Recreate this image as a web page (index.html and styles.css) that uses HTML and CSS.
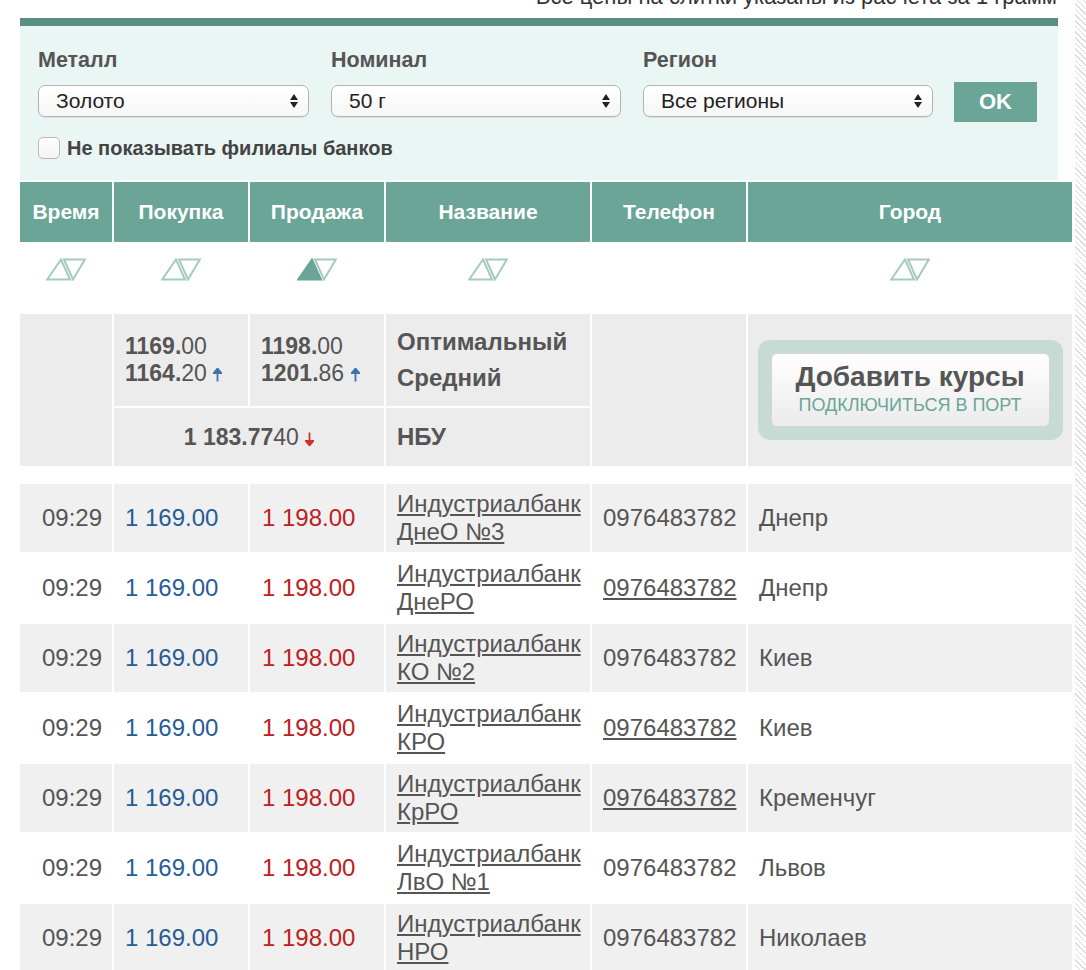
FILE: index.html
```html
<!DOCTYPE html>
<html lang="ru">
<head>
<meta charset="utf-8">
<title>Курсы слитков</title>
<link rel="stylesheet" href="styles.css">
</head>
<body>
<div class="page">
  <main class="content">
    <p class="note">Все цены на слитки указаны из расчета за 1 грамм</p>
    <div class="topbar"></div>
    <form class="filters">
      <div class="fields">
        <div class="field field-metal">
          <span class="field-label">Металл</span>
          <span class="select"><span class="select-text">Золото</span><svg class="select-arrows" width="8" height="14" viewBox="0 0 8 14"><path d="M0 6 L4 0 L8 6 Z M0 8 L4 14 L8 8 Z"/></svg></span>
        </div>
        <div class="field field-nominal">
          <span class="field-label">Номинал</span>
          <span class="select"><span class="select-text">50 г</span><svg class="select-arrows" width="8" height="14" viewBox="0 0 8 14"><path d="M0 6 L4 0 L8 6 Z M0 8 L4 14 L8 8 Z"/></svg></span>
        </div>
        <div class="field field-region">
          <span class="field-label">Регион</span>
          <span class="select"><span class="select-text">Все регионы</span><svg class="select-arrows" width="8" height="14" viewBox="0 0 8 14"><path d="M0 6 L4 0 L8 6 Z M0 8 L4 14 L8 8 Z"/></svg></span>
        </div>
        <button class="ok" type="button">OK</button>
      </div>
      <label class="check"><span class="box"></span><span class="check-text">Не показывать филиалы банков</span></label>
    </form>

    <table class="rates">
      <colgroup>
        <col class="c-time"><col class="c-buy"><col class="c-sell"><col class="c-name"><col class="c-phone"><col class="c-city">
      </colgroup>
      <thead>
        <tr class="head">
          <th>Время</th><th>Покупка</th><th>Продажа</th><th>Название</th><th>Телефон</th><th>Город</th>
        </tr>
        <tr class="sort">
          <td><svg class="sort-ic" width="40" height="23" viewBox="0 0 40 23"><path class="up" d="M1.2 21.5 L15 1.5 L24 21.5 Z"/><path class="down" d="M18 1.5 L38.8 1.5 L27 21.5 Z"/></svg></td>
          <td><svg class="sort-ic" width="40" height="23" viewBox="0 0 40 23"><path class="up" d="M1.2 21.5 L15 1.5 L24 21.5 Z"/><path class="down" d="M18 1.5 L38.8 1.5 L27 21.5 Z"/></svg></td>
          <td><svg class="sort-ic active" width="40" height="23" viewBox="0 0 40 23"><path class="up" d="M1.2 21.5 L15 1.5 L24 21.5 Z"/><path class="down" d="M18 1.5 L38.8 1.5 L27 21.5 Z"/></svg></td>
          <td><svg class="sort-ic" width="40" height="23" viewBox="0 0 40 23"><path class="up" d="M1.2 21.5 L15 1.5 L24 21.5 Z"/><path class="down" d="M18 1.5 L38.8 1.5 L27 21.5 Z"/></svg></td>
          <td></td>
          <td><svg class="sort-ic" width="40" height="23" viewBox="0 0 40 23"><path class="up" d="M1.2 21.5 L15 1.5 L24 21.5 Z"/><path class="down" d="M18 1.5 L38.8 1.5 L27 21.5 Z"/></svg></td>
        </tr>
      </thead>
      <tbody class="summary">
        <tr class="sum-top">
          <td rowspan="2"></td>
          <td class="num"><span class="v"><b>1169.</b>00</span><span class="v"><b>1164.</b>20 <svg class="arr up" width="9" height="14" viewBox="0 0 9 14"><path d="M4.5 13.5 V3"/><path class="head" d="M0.8 5 L4.5 0.5 L8.2 5 Z"/></svg></span></td>
          <td class="num"><span class="v"><b>1198.</b>00</span><span class="v"><b>1201.</b>86 <svg class="arr up" width="9" height="14" viewBox="0 0 9 14"><path d="M4.5 13.5 V3"/><path class="head" d="M0.8 5 L4.5 0.5 L8.2 5 Z"/></svg></span></td>
          <td class="sum-name"><span class="v">Оптимальный</span><span class="v">Средний</span></td>
          <td rowspan="2"></td>
          <td rowspan="2" class="promo-cell">
            <a class="promo" href="#"><span class="promo-inner"><span class="promo-title">Добавить курсы</span><span class="promo-sub">ПОДКЛЮЧИТЬСЯ В ПОРТ</span></span></a>
          </td>
        </tr>
        <tr class="sum-bottom">
          <td colspan="2" class="nbu"><b>1 183.77</b>40 <svg class="arr down" width="9" height="14" viewBox="0 0 9 14"><path d="M4.5 0.5 V11"/><path class="head" d="M0.8 9 L4.5 13.5 L8.2 9 Z"/></svg></td>
          <td class="sum-name">НБУ</td>
        </tr>
      </tbody>
      <tbody class="gap"><tr><td colspan="6"></td></tr></tbody>
      <tbody class="rows">
        <tr>
          <td class="time">09:29</td><td class="buy">1 169.00</td><td class="sell">1 198.00</td>
          <td class="name"><a href="#">Индустриалбанк<br>ДнеО №3</a></td>
          <td class="phone">0976483782</td><td class="city">Днепр</td>
        </tr>
        <tr>
          <td class="time">09:29</td><td class="buy">1 169.00</td><td class="sell">1 198.00</td>
          <td class="name"><a href="#">Индустриалбанк<br>ДнеРО</a></td>
          <td class="phone"><a href="#">0976483782</a></td><td class="city">Днепр</td>
        </tr>
        <tr>
          <td class="time">09:29</td><td class="buy">1 169.00</td><td class="sell">1 198.00</td>
          <td class="name"><a href="#">Индустриалбанк<br>КО №2</a></td>
          <td class="phone">0976483782</td><td class="city">Киев</td>
        </tr>
        <tr>
          <td class="time">09:29</td><td class="buy">1 169.00</td><td class="sell">1 198.00</td>
          <td class="name"><a href="#">Индустриалбанк<br>КРО</a></td>
          <td class="phone"><a href="#">0976483782</a></td><td class="city">Киев</td>
        </tr>
        <tr>
          <td class="time">09:29</td><td class="buy">1 169.00</td><td class="sell">1 198.00</td>
          <td class="name"><a href="#">Индустриалбанк<br>КрРО</a></td>
          <td class="phone"><a href="#">0976483782</a></td><td class="city">Кременчуг</td>
        </tr>
        <tr>
          <td class="time">09:29</td><td class="buy">1 169.00</td><td class="sell">1 198.00</td>
          <td class="name"><a href="#">Индустриалбанк<br>ЛвО №1</a></td>
          <td class="phone">0976483782</td><td class="city">Львов</td>
        </tr>
        <tr>
          <td class="time">09:29</td><td class="buy">1 169.00</td><td class="sell">1 198.00</td>
          <td class="name"><a href="#">Индустриалбанк<br>НРО</a></td>
          <td class="phone">0976483782</td><td class="city">Николаев</td>
        </tr>
      </tbody>
    </table>
  </main>
  <div class="stripe"></div>
</div>
</body>
</html>
```

FILE: styles.css
```css
html, body {
  margin: 0;
  padding: 0;
  overflow: hidden;
  background: #fff;
}

body {
  font-family: "Liberation Sans", Arial, Helvetica, sans-serif;
  color: #555;
}

.page {
  display: flex;
  height: 970px;
  padding-left: 20px;
}

.content {
  width: 1052px;
  flex: none;
}

.stripe {
  width: 11px;
  margin-left: 3px;
  flex: none;
  background: repeating-linear-gradient(45deg, #fff 0 3px, #dcdcdc 3px 4px);
}

/* top note, mostly scrolled off */
.note {
  width: 1037px;
  margin: -16px 0 8px;
  text-align: right;
  font-size: 22px;
  line-height: 26px;
  color: #333;
}

.topbar {
  width: 1038px;
  height: 8px;
  background: #5a8f84;
}

/* filter panel */
.filters {
  width: 1038px;
  box-sizing: border-box;
  margin: 0;
  padding: 22px 21px 21px 18px;
  background: #eaf6f4;
}

.fields {
  display: flex;
  align-items: flex-end;
}

.field {
  display: flex;
  flex-direction: column;
}

.field-metal { width: 271px; margin-right: 22px; }
.field-nominal { width: 290px; margin-right: 22px; }
.field-region { width: 290px; margin-right: 21px; }

.field-label {
  font-size: 21.5px;
  line-height: 24px;
  font-weight: bold;
  color: #555;
  margin-bottom: 13px;
}

.select {
  display: flex;
  align-items: center;
  justify-content: space-between;
  height: 32px;
  box-sizing: border-box;
  padding: 0 10px 0 17px;
  border: 1px solid #b3b3b3;
  border-radius: 7px;
  background: linear-gradient(#ffffff, #f6f6f6);
  box-shadow: 0 1px 1px rgba(0,0,0,0.08);
}

.select-text {
  font-size: 21px;
  color: #222;
}

.select-arrows {
  fill: #222;
}

.ok {
  width: 83px;
  height: 40px;
  margin-bottom: -5px;
  padding: 0;
  border: 0;
  background: #6aa597;
  color: #fff;
  font-family: inherit;
  font-size: 22px;
  font-weight: bold;
}

.check {
  display: flex;
  align-items: center;
  margin-top: 20px;
  height: 22px;
}

.box {
  width: 22px;
  height: 22px;
  box-sizing: border-box;
  border: 1px solid #b8b8b8;
  border-radius: 5px;
  background: linear-gradient(#ffffff, #f3f3f3);
  margin-right: 7px;
}

.check-text {
  font-size: 20px;
  font-weight: bold;
  color: #444;
}

/* table */
.rates {
  table-layout: fixed;
  width: 1056px;
  margin: 0 -2px;
  border-collapse: separate;
  border-spacing: 2px;
}

.c-time { width: 92px; }
.c-buy { width: 134px; }
.c-sell { width: 134px; }
.c-name { width: 204px; }
.c-phone { width: 154px; }
.c-city { width: 324px; }

.rates td, .rates th {
  padding: 0;
}

.head th {
  height: 60px;
  background: #6aa597;
  color: #fff;
  font-size: 21px;
  font-weight: bold;
  text-align: center;
  vertical-align: middle;
}

.sort td {
  height: 68px;
  box-sizing: border-box;
  padding-top: 14px;
  vertical-align: top;
  text-align: center;
}

.sort-ic {
  display: inline-block;
  vertical-align: top;
}

.sort-ic path {
  fill: none;
  stroke: #a4cac1;
  stroke-width: 2;
  stroke-linejoin: miter;
}

.sort-ic.active .up {
  fill: #6aa597;
  stroke: #6aa597;
}

/* summary block */
.summary td {
  background: #ececec;
  vertical-align: middle;
  color: #555;
  font-size: 23px;
}

.sum-top td { height: 92px; }
.sum-bottom td { height: 58px; }

.summary .num {
  padding-left: 11px;
}

.summary .num .v {
  display: block;
  line-height: 27px;
  white-space: nowrap;
}

.summary b {
  font-weight: bold;
}

.summary .sum-name {
  padding-left: 11px;
  font-weight: bold;
  font-size: 24px;
}

.sum-name .v {
  display: block;
  line-height: 36px;
}

.nbu {
  text-align: center;
}

.arr {
  display: inline-block;
  vertical-align: -1px;
}

.arr path {
  stroke-width: 1.8;
  fill: none;
}

.arr path.head {
  stroke: none;
}

.arr.up path { stroke: #3a74b0; }
.arr.up path.head { fill: #3a74b0; }
.arr.down path { stroke: #d03030; }
.arr.down path.head { fill: #d03030; }

.promo-cell {
  text-align: center;
  padding: 0;
}

.promo {
  display: block;
  width: 305px;
  margin: 0 auto;
  padding: 13px;
  box-sizing: border-box;
  background: #c6dad6;
  border-radius: 12px;
  text-decoration: none;
}

.promo-inner {
  display: flex;
  flex-direction: column;
  align-items: center;
  height: 74px;
  box-sizing: border-box;
  padding-top: 7px;
  border: 1px solid #d6d6d6;
  border-radius: 6px;
  background: linear-gradient(#ffffff, #ebebeb);
}

.promo-title {
  font-size: 28px;
  line-height: 32px;
  font-weight: bold;
  color: #555;
}

.promo-sub {
  margin-top: 2px;
  font-size: 18px;
  line-height: 20px;
  color: #6aa597;
}

.gap td {
  height: 14px;
}

/* data rows */
.rows td {
  height: 68px;
  font-size: 24px;
  vertical-align: middle;
  color: #555;
  padding-left: 11px;
  white-space: nowrap;
}

.rows tr:nth-child(odd) td {
  background: #f0f0f0;
}

.rows .time {
  text-align: right;
  padding-left: 0;
  padding-right: 10px;
}

.rows .buy { color: #275c96; }
.rows .sell { color: #bd2021; padding-left: 12px; }

.rows .name {
  line-height: 28px;
}

.rows a {
  color: #555;
  text-decoration: underline;
}
```
